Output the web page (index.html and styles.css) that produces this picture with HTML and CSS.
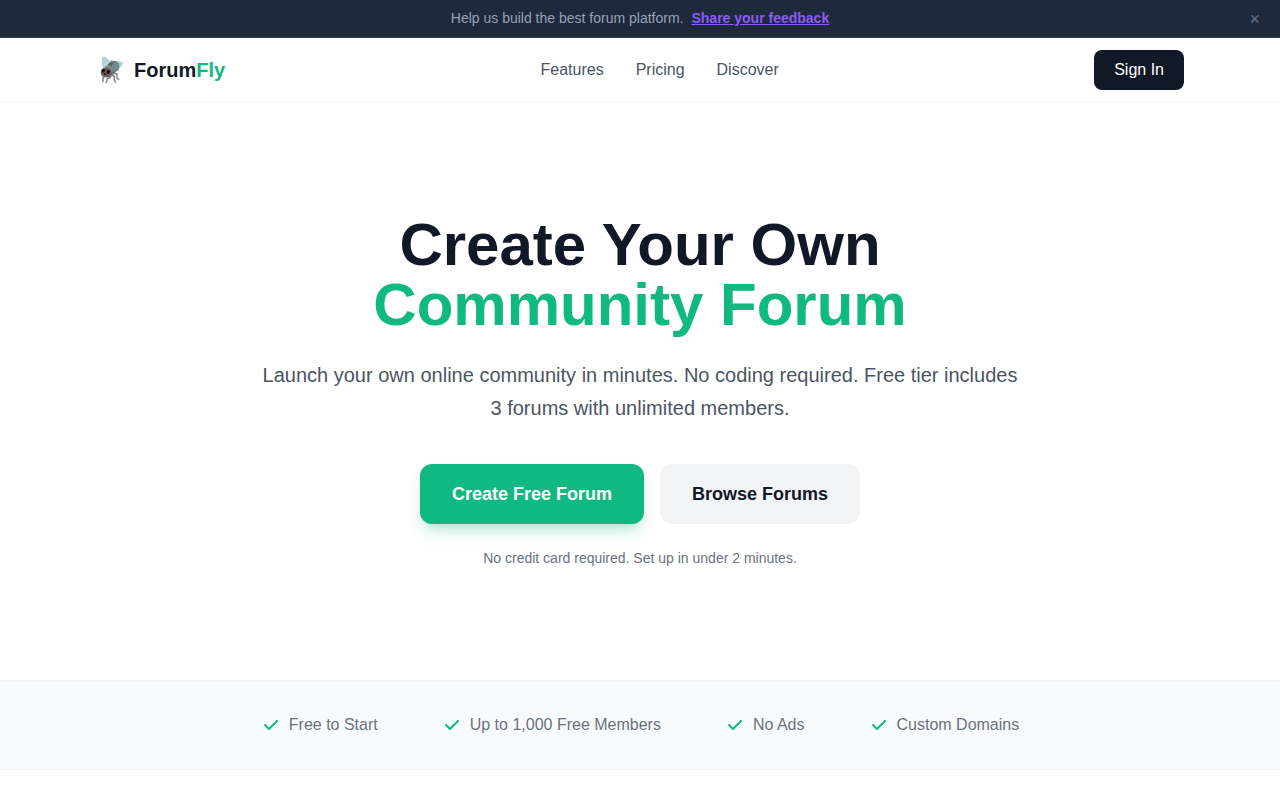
FILE: index.html
```
<!DOCTYPE html>
<html lang="en">
<head>
  <meta charset="UTF-8">
  <meta name="viewport" content="width=device-width, initial-scale=1">
  <title>ForumFly - Create Your Own Community Forum</title>
  <link rel="stylesheet" href="styles.css">
</head>
<body>
  <!-- Feedback banner -->
  <div class="banner">
    <span>Help us build the best forum platform.</span>
    <a href="#feedback">Share your feedback</a>
    <button type="button" class="banner-close" aria-label="Dismiss">×</button>
  </div>

  <!-- Navigation -->
  <header class="header">
    <div class="header-inner">
      <a class="logo" href="#">
        <span class="logo-icon">🪰</span>
        <span>Forum<span class="accent">Fly</span></span>
      </a>
      <nav class="nav">
        <a href="#features">Features</a>
        <a href="#pricing">Pricing</a>
        <a href="#discover">Discover</a>
      </nav>
      <button type="button" class="sign-in">Sign In</button>
    </div>
  </header>

  <main>
    <!-- Hero -->
    <section class="hero">
      <h1>Create Your Own<br><span class="accent">Community Forum</span></h1>
      <p class="subtitle">Launch your own online community in minutes. No coding required. Free tier includes 3 forums with unlimited members.</p>
      <div class="actions">
        <button type="button" class="btn btn-primary">Create Free Forum</button>
        <button type="button" class="btn btn-secondary">Browse Forums</button>
      </div>
      <p class="note">No credit card required. Set up in under 2 minutes.</p>
    </section>

    <!-- Highlights -->
    <ul class="highlights">
      <li>
        <svg class="check" viewBox="0 0 20 20" aria-hidden="true"><path d="M16.707 5.293a1 1 0 010 1.414l-8 8a1 1 0 01-1.414 0l-4-4a1 1 0 011.414-1.414L8 12.586l7.293-7.293a1 1 0 011.414 0z"/></svg>
        Free to Start
      </li>
      <li>
        <svg class="check" viewBox="0 0 20 20" aria-hidden="true"><path d="M16.707 5.293a1 1 0 010 1.414l-8 8a1 1 0 01-1.414 0l-4-4a1 1 0 011.414-1.414L8 12.586l7.293-7.293a1 1 0 011.414 0z"/></svg>
        Up to 1,000 Free Members
      </li>
      <li>
        <svg class="check" viewBox="0 0 20 20" aria-hidden="true"><path d="M16.707 5.293a1 1 0 010 1.414l-8 8a1 1 0 01-1.414 0l-4-4a1 1 0 011.414-1.414L8 12.586l7.293-7.293a1 1 0 011.414 0z"/></svg>
        No Ads
      </li>
      <li>
        <svg class="check" viewBox="0 0 20 20" aria-hidden="true"><path d="M16.707 5.293a1 1 0 010 1.414l-8 8a1 1 0 01-1.414 0l-4-4a1 1 0 011.414-1.414L8 12.586l7.293-7.293a1 1 0 011.414 0z"/></svg>
        Custom Domains
      </li>
    </ul>
  </main>
</body>
</html>
```
FILE: styles.css
```
* {
  box-sizing: border-box;
}
body {
  margin: 0;
  background: #fff;
  color: #111827;
  font-family: "Liberation Sans", Arial, sans-serif;
  font-size: 16px;
  line-height: 24px;
}
a {
  color: inherit;
  text-decoration: none;
}
button {
  border: none;
  font: inherit;
  cursor: pointer;
}
.accent {
  color: #10b981;
}

/* Banner */
.banner {
  position: relative;
  display: flex;
  justify-content: center;
  gap: 8px;
  padding: 8px 48px;
  background: #1e293b;
  border-bottom: 1px solid #334155;
  color: #94a3b8;
  font-size: 14px;
  line-height: 21px;
}
.banner a {
  color: #8b5cf6;
  font-weight: bold;
  text-decoration: underline;
}
.banner-close {
  position: absolute;
  top: 8px;
  right: 16px;
  padding: 0 4px;
  background: none;
  color: #64748b;
  font-size: 18px;
  line-height: 23px;
}

/* Header */
.header {
  border-bottom: 1px solid #f3f4f6;
}
.header-inner {
  display: flex;
  align-items: center;
  justify-content: space-between;
  max-width: 1152px;
  margin: 0 auto;
  padding: 12px 32px;
}
.logo {
  display: flex;
  align-items: center;
  gap: 8px;
  font-size: 20px;
  font-weight: bold;
  line-height: 28px;
}
.logo-icon {
  font-size: 24px;
  line-height: 32px;
}
.nav {
  display: flex;
  gap: 32px;
  color: #4b5563;
}
.sign-in {
  padding: 8px 20px;
  background: #111827;
  border-radius: 8px;
  color: #fff;
}

/* Hero */
.hero {
  max-width: 832px;
  margin: 0 auto;
  padding: 112px 32px;
  text-align: center;
}
.hero h1 {
  margin: 0 0 24px;
  font-size: 60px;
  line-height: 60px;
}
.subtitle {
  margin: 0 0 39px;
  color: #4b5563;
  font-size: 20px;
  line-height: 33px;
}
.actions {
  display: flex;
  justify-content: center;
  gap: 16px;
}
.btn {
  padding: 16px 32px;
  border-radius: 12px;
  font-size: 18px;
  font-weight: bold;
  line-height: 28px;
}
.btn-primary {
  background: #10b981;
  color: #fff;
  box-shadow: 0 10px 15px -3px rgba(16, 185, 129, 0.25), 0 4px 6px -4px rgba(16, 185, 129, 0.25);
}
.btn-secondary {
  background: #f3f4f6;
  color: #111827;
}
.note {
  margin: 24px 0 0;
  color: #6b7280;
  font-size: 14px;
  line-height: 20px;
}

/* Highlights */
.highlights {
  display: flex;
  flex-wrap: wrap;
  justify-content: center;
  gap: 24px 64px;
  margin: 0;
  padding: 32px;
  background: #f9fafb;
  border-top: 1px solid #f3f4f6;
  border-bottom: 1px solid #f3f4f6;
  color: #6b7280;
  list-style: none;
}
.highlights li {
  display: flex;
  align-items: center;
  gap: 8px;
}
.check {
  width: 20px;
  height: 20px;
  fill: #10b981;
}
```
